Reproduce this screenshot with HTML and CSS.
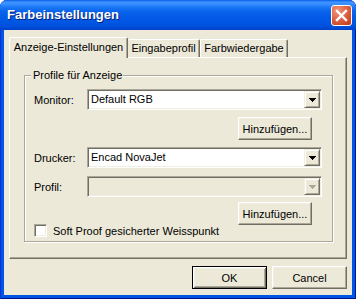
FILE: index.html
```html
<!DOCTYPE html>
<html lang="de">
<head>
<meta charset="utf-8">
<title>Farbeinstellungen</title>
<link rel="stylesheet" href="styles.css">
</head>
<body>
<div class="window">
  <div class="titlebar">
    <span class="title">Farbeinstellungen</span>
    <button class="close" aria-label="Schließen">
      <svg width="19" height="19" viewBox="0 0 19 19"><path d="M5 5 L14 14 M14 5 L5 14" stroke="#fff" stroke-width="2.4" stroke-linecap="square" fill="none"/></svg>
    </button>
  </div>
  <div class="client">
    <div class="tabs">
      <div class="tab active">Anzeige-Einstellungen</div>
      <div class="tab t2">Eingabeprofil</div>
      <div class="tab t3">Farbwiedergabe</div>
    </div>
    <div class="panel">
      <fieldset class="group">
        <legend>Profile für Anzeige</legend>
        <div class="row">
          <span class="lbl">Monitor:</span>
          <div class="combo"><span class="val">Default RGB</span><span class="drop"><svg width="7" height="4" viewBox="0 0 7 4" shape-rendering="crispEdges"><path d="M0 0h7v1h-1v1h-1v1h-1v1h-1v-1h-1v-1h-1v-1h-1z"/></svg></span></div>
        </div>
        <div class="btnrow"><button class="btn">Hinzufügen...</button></div>
        <div class="row r-drucker">
          <span class="lbl">Drucker:</span>
          <div class="combo"><span class="val">Encad NovaJet</span><span class="drop"><svg width="7" height="4" viewBox="0 0 7 4" shape-rendering="crispEdges"><path d="M0 0h7v1h-1v1h-1v1h-1v1h-1v-1h-1v-1h-1v-1h-1z"/></svg></span></div>
        </div>
        <div class="row r-profil">
          <span class="lbl">Profil:</span>
          <div class="combo dis"><span class="val"></span><span class="drop"><svg width="7" height="4" viewBox="0 0 7 4" shape-rendering="crispEdges"><path d="M0 0h7v1h-1v1h-1v1h-1v1h-1v-1h-1v-1h-1v-1h-1z"/></svg></span></div>
        </div>
        <div class="btnrow b2"><button class="btn">Hinzufügen...</button></div>
        <label class="check"><span class="box"></span>Soft Proof gesicherter Weisspunkt</label>
      </fieldset>
    </div>
    <div class="actions">
      <button class="btn default">OK</button>
      <button class="btn">Cancel</button>
    </div>
  </div>
</div>
</body>
</html>
```
FILE: styles.css
```css
* { box-sizing: border-box; }
html, body { margin: 0; padding: 0; }
body {
  width: 356px;
  height: 299px;
  overflow: hidden;
  background: #ffffff;
  font-family: "Liberation Sans", Arial, sans-serif;
  font-size: 11px;
  color: #000;
}
.window {
  width: 356px;
  height: 299px;
  display: flex;
  flex-direction: column;
  border-radius: 7px 7px 0 0;
  overflow: hidden;
  background: #0055e5;
  box-shadow: inset 1px 0 #0831d9, inset -1px 0 #00138c, inset 0 -1px #00138c;
}
.titlebar {
  height: 30px;
  flex: none;
  display: flex;
  align-items: center;
  padding: 0 4px 0 7px;
  background: linear-gradient(to bottom,
    #0a5ae6 0px, #3d95ff 2px, #3a8fff 4px, #1b79f7 7px,
    #0b65ec 11px, #045ce8 16px, #0057e4 21px, #0053df 25px,
    #004ad6 28px, #003fc6 30px);
}
.title {
  font: bold 13px "Liberation Sans", Arial, sans-serif;
  color: #fff;
  text-shadow: 1px 1px 0 #0a1e72;
  padding-bottom: 1px;
}
.close {
  margin-left: auto;
  margin-top: 1px;
  width: 21px;
  height: 21px;
  padding: 0;
  border: 1px solid #fff;
  border-radius: 3px;
  background: radial-gradient(circle at 30% 25%, #f0947a 0%, #e26a4c 40%, #cf4a2b 75%, #c03a1c 100%);
  display: flex;
  align-items: center;
  justify-content: center;
}
.close svg { display: block; }
.client {
  flex: 1;
  margin: 0 4px 4px;
  background: #ece9d8;
  padding: 7px 5px 6px;
  display: flex;
  flex-direction: column;
}
.tabs {
  display: flex;
  height: 20px;
  flex: none;
  position: relative;
  z-index: 1;
}
.tab {
  background: #ece9d8;
  border-left: 1px solid #fff;
  border-top: 1px solid #fff;
  border-right: 1px solid #716f64;
  box-shadow: inset -1px 0 #aca899;
  border-radius: 2px 2px 0 0;
  text-align: center;
  line-height: 14px;
  white-space: nowrap;
}
.tab.active {
  width: 119px;
  height: 21px;
  padding-top: 2px;
}
.tab.t2, .tab.t3 {
  height: 18px;
  margin-top: 2px;
  padding-top: 1px;
}
.tab.t2 { width: 72px; border-left: 0; }
.tab.t3 { width: 88px; }
.panel {
  height: 202px;
  flex: none;
  border: 1px solid;
  border-color: #fff #716f64 #716f64 #fff;
  box-shadow: inset -1px -1px #aca899;
  padding: 11px 13px 0 14px;
}
.group {
  margin: 0;
  min-width: 0;
  border: 1px solid #aca899;
  box-shadow: inset 1px 1px #fff, 1px 1px #fff;
  padding: 7px 10px 4px 9px;
}
.group legend {
  margin-left: -3px;
  padding: 0 1px 0 2px;
  line-height: 13px;
  background: #ece9d8;
}
.row {
  display: flex;
  align-items: center;
  height: 21px;
}
.lbl { width: 53px; flex: none; white-space: nowrap; }
.combo {
  flex: 1;
  height: 21px;
  display: flex;
  border: 1px solid;
  border-color: #aca899 #fff #fff #aca899;
  padding: 1px;
  box-shadow: inset 1px 1px #716f64, inset -1px -1px #f1efe2;
  background: #fff;
}
.combo .val {
  flex: 1;
  padding-left: 2px;
  line-height: 17px;
  white-space: nowrap;
}
.drop {
  width: 16px;
  height: 17px;
  flex: none;
  display: flex;
  align-items: center;
  justify-content: center;
  background: #ece9d8;
  border: 1px solid;
  border-color: #f1efe2 #716f64 #716f64 #f1efe2;
  box-shadow: inset 1px 1px #fff, inset -1px -1px #aca899;
}
.drop svg { display: block; fill: #000; }
.combo.dis { background: #ece9d8; }
.combo.dis .drop svg { fill: #aca899; }
.btnrow {
  display: flex;
  justify-content: flex-end;
  padding-right: 10px;
  margin-top: 7px;
}
.r-drucker { margin-top: 7px; }
.r-profil { margin-top: 8px; }
.btnrow.b2 { margin-top: 5px; }
.btn {
  width: 74px;
  height: 23px;
  padding: 0;
  font: 11px "Liberation Sans", Arial, sans-serif;
  color: #000;
  background: #ece9d8;
  border: 1px solid;
  border-color: #fff #716f64 #716f64 #fff;
  box-shadow: inset -1px -1px #aca899, inset 1px 1px #f1efe2;
}
.check {
  display: flex;
  align-items: center;
  height: 13px;
  margin-top: -1px;
  white-space: nowrap;
}
.check .box {
  width: 13px;
  height: 13px;
  flex: none;
  margin-right: 6px;
  background: #fff;
  border: 1px solid;
  border-color: #aca899 #fff #fff #aca899;
  box-shadow: inset 1px 1px #716f64, inset -1px -1px #f1efe2;
}
.actions {
  display: flex;
  justify-content: flex-end;
  gap: 5px;
  margin-top: 7px;
}
.actions .btn { width: 75px; }
.btn.default {
  border: 1px solid #000;
  box-shadow: inset 1px 1px #fff, inset -1px -1px #716f64, inset 2px 2px #f1efe2, inset -2px -2px #aca899;
}
```
